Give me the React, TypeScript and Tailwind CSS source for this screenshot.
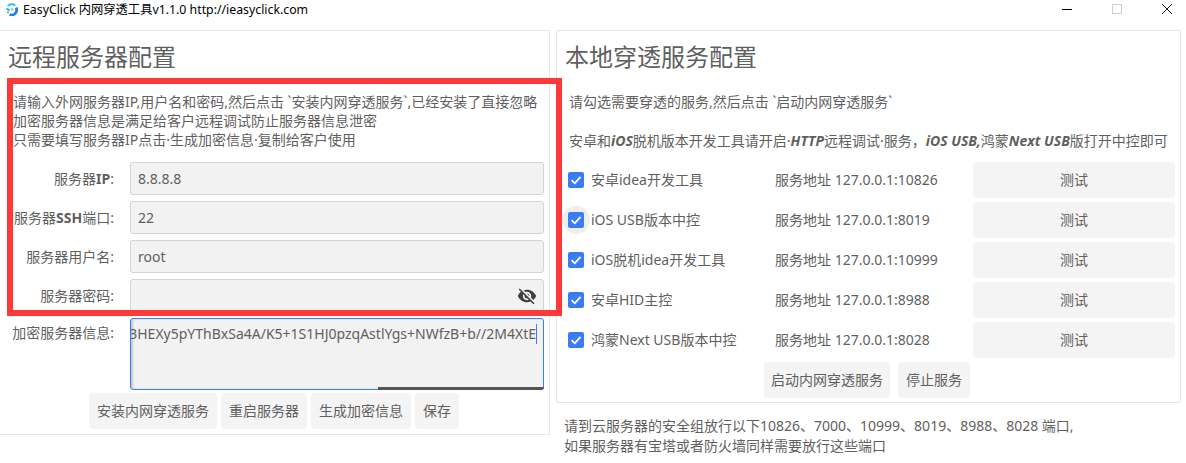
import { MdVisibilityOff } from 'react-icons/md'

const font = { fontFamily: '"Noto Sans", "Noto Sans CJK SC", sans-serif' }

const fields = [
    { label: <>服务器<b>IP</b>:</>, value: '8.8.8.8' },
    { label: <>服务器<b>SSH</b>端口:</>, value: '22' },
    { label: '服务器用户名:', value: 'root' },
    { label: '服务器密码:', value: '', eye: true },
]

const services = [
    { name: '安卓idea开发工具', addr: '服务地址 127.0.0.1:10826' },
    { name: 'iOS USB版本中控', addr: '服务地址 127.0.0.1:8019', hover: true },
    { name: 'iOS脱机idea开发工具', addr: '服务地址 127.0.0.1:10999' },
    { name: '安卓HID主控', addr: '服务地址 127.0.0.1:8988' },
    { name: '鸿蒙Next USB版本中控', addr: '服务地址 127.0.0.1:8028' },
]

function Btn({ children, className = '' }: { children: React.ReactNode; className?: string }) {
    return (
        <button className={`h-9 rounded bg-[#f4f4f4] text-sm text-[#5f5f5f] ${className}`}>
            {children}
        </button>
    )
}

function Checkbox({ hover }: { hover?: boolean }) {
    return (
        <span className="relative flex h-4 w-4 items-center justify-center rounded-[2px] bg-[#3b7cf4]">
            {hover && <span className="absolute -inset-1.5 -z-10 rounded-full bg-[#eeeeee]" />}
            <svg viewBox="0 0 16 16" className="h-4 w-4" fill="none" stroke="white" strokeWidth="1.8">
                <path d="M3.5 8.2 L6.8 11.3 L12.5 4.8" />
            </svg>
        </span>
    )
}

export default function App() {
    return (
        <div className="relative isolate h-[463px] w-[1186px] overflow-hidden bg-white text-sm text-[#5f5f5f]" style={font}>
            {/* title bar */}
            <div className="flex h-[30px] items-start text-black">
                <svg viewBox="0 0 14 14" className="ml-[5px] mt-[3px] h-[13px] w-[13px]">
                    <path d="M3 3.5 A5 5 0 0 1 11 3" fill="none" stroke="#4cc0f2" strokeWidth="2.4" />
                    <path d="M12 5 A5.5 5.5 0 0 1 5 12.5" fill="none" stroke="#1f7fe6" strokeWidth="3" />
                    <path d="M1.5 6 L5 8 M2.5 9.5 L4 10.5" stroke="#3aa8ee" strokeWidth="2" />
                    <circle cx="7.5" cy="7" r="1.6" fill="#8fd0f5" />
                </svg>
                <span className="ml-[5px] text-[12.3px] leading-[20px]">EasyClick 内网穿透工具v1.1.0 http://ieasyclick.com</span>
                <div className="ml-auto flex h-[18px] items-center gap-[40px] pr-[14px]">
                    <span className="h-px w-[10px] bg-black" />
                    <span className="h-[10px] w-[10px] border border-[#cfcfcf]" />
                    <svg viewBox="0 0 10 10" className="h-[10px] w-[10px]" stroke="black" strokeWidth="0.9">
                        <path d="M0 0 L10 10 M10 0 L0 10" />
                    </svg>
                </div>
            </div>

            <div className="flex items-start">
                {/* remote */}
                <div className="h-[405px] w-[550px] border-r border-b border-t border-[#e6e6e6] pl-2">
                    <div className="mt-[8px] h-[36px] text-[24px] leading-[36px]">远程服务器配置</div>
                    <div className="mt-[17px] pl-[5px] leading-[19px]">
                        <div>请输入外网服务器IP,用户名和密码,然后点击 `安装内网穿透服务`,已经安装了直接忽略</div>
                        <div>加密服务器信息是满足给客户远程调试防止服务器信息泄密</div>
                        <div>只需要填写服务器IP点击·生成加密信息·复制给客户使用</div>
                    </div>
                    <div className="mt-[13px] flex flex-col gap-[6px]">
                        {fields.map((f, i) => (
                            <div key={i} className="flex items-center">
                                <div className="w-[106px] shrink-0 whitespace-nowrap text-right">{f.label}</div>
                                <div className="ml-[16px] flex h-[33px] w-[414px] items-center justify-between rounded-[3px] border border-[#d4d4d4] bg-[#f2f2f2] pl-[7px] pr-[6px]">
                                    <span>{f.value}</span>
                                    {f.eye && <MdVisibilityOff className="h-[20px] w-[20px] text-[#3f3f3f]" />}
                                </div>
                            </div>
                        ))}
                    </div>
                    <div className="mt-[6px] flex">
                        <div className="mt-[5px] w-[106px] shrink-0 whitespace-nowrap text-right">加密服务器信息:</div>
                        <div className="relative ml-[16px] h-[72px] w-[414px]">
                            <div className="h-full overflow-hidden rounded-[3px] border border-[#3b7cf4] bg-[#f2f2f2] shadow-[inset_2px_0_2px_#c8c8c8]">
                                <div className="flex h-[30px] items-center justify-end whitespace-nowrap pr-[6px]">
                                    <span className="border-r border-[#3b7cf4]">
                                        3HEXy5pYThBxSa4A/K5+1S1HJ0pzqAstlYgs+NWfzB+b//2M4XtE
                                    </span>
                                </div>
                            </div>
                            <div className="absolute bottom-0 right-0 h-[3px] w-[166px] rounded-br-[3px] bg-[#555555]" />
                        </div>
                    </div>
                    <div className="mt-[3px] flex justify-center gap-[4px] pr-[9px]">
                        <Btn className="w-[128px]">安装内网穿透服务</Btn>
                        <Btn className="w-[86px]">重启服务器</Btn>
                        <Btn className="w-[100px]">生成加密信息</Btn>
                        <Btn className="w-[44px]">保存</Btn>
                    </div>
                </div>

                {/* local */}
                <div className="ml-[6px] w-[625px]">
                    <div className="h-[373px] rounded-[2px] border border-[#e6e6e6] pl-2">
                        <div className="mt-[8px] h-[36px] text-[24px] leading-[36px]">本地穿透服务配置</div>
                        <div className="mt-[17px] pl-[4px] leading-[19px]">请勾选需要穿透的服务,然后点击 `启动内网穿透服务`</div>
                        <div className="mt-[20px] whitespace-nowrap pl-[4px] leading-[19px]">
                            安卓和<b><i>iOS</i></b>脱机版本开发工具请开启·<b><i>HTTP</i></b>远程调试·服务，<b><i>iOS USB,</i></b>鸿蒙<b><i>Next USB</i></b>版打开中控即可
                        </div>
                        <div className="mt-[12px] flex flex-col gap-[4px]">
                            {services.map((s) => (
                                <div key={s.name} className="flex h-9 items-center">
                                    <div className="ml-[3px] flex w-[207px] items-center gap-[7px]">
                                        <Checkbox hover={s.hover} />
                                        <span>{s.name}</span>
                                    </div>
                                    <span className="w-[198px]">{s.addr}</span>
                                    <Btn className="w-[202px]">测试</Btn>
                                </div>
                            ))}
                        </div>
                        <div className="mt-[4px] flex gap-[8px] pl-[199px]">
                            <Btn className="w-[126px]">启动内网穿透服务</Btn>
                            <Btn className="w-[72px]">停止服务</Btn>
                        </div>
                    </div>
                    <div className="mt-[13px] pl-[8px] leading-[20px]">
                        <div>请到云服务器的安全组放行以下10826、7000、10999、8019、8988、8028 端口,</div>
                        <div>如果服务器有宝塔或者防火墙同样需要放行这些端口</div>
                    </div>
                </div>
            </div>

            {/* red annotation */}
            <div className="pointer-events-none absolute left-[7px] top-[78px] h-[238px] w-[555px] border-[6px] border-[#ff3838]" />
        </div>
    )
}
